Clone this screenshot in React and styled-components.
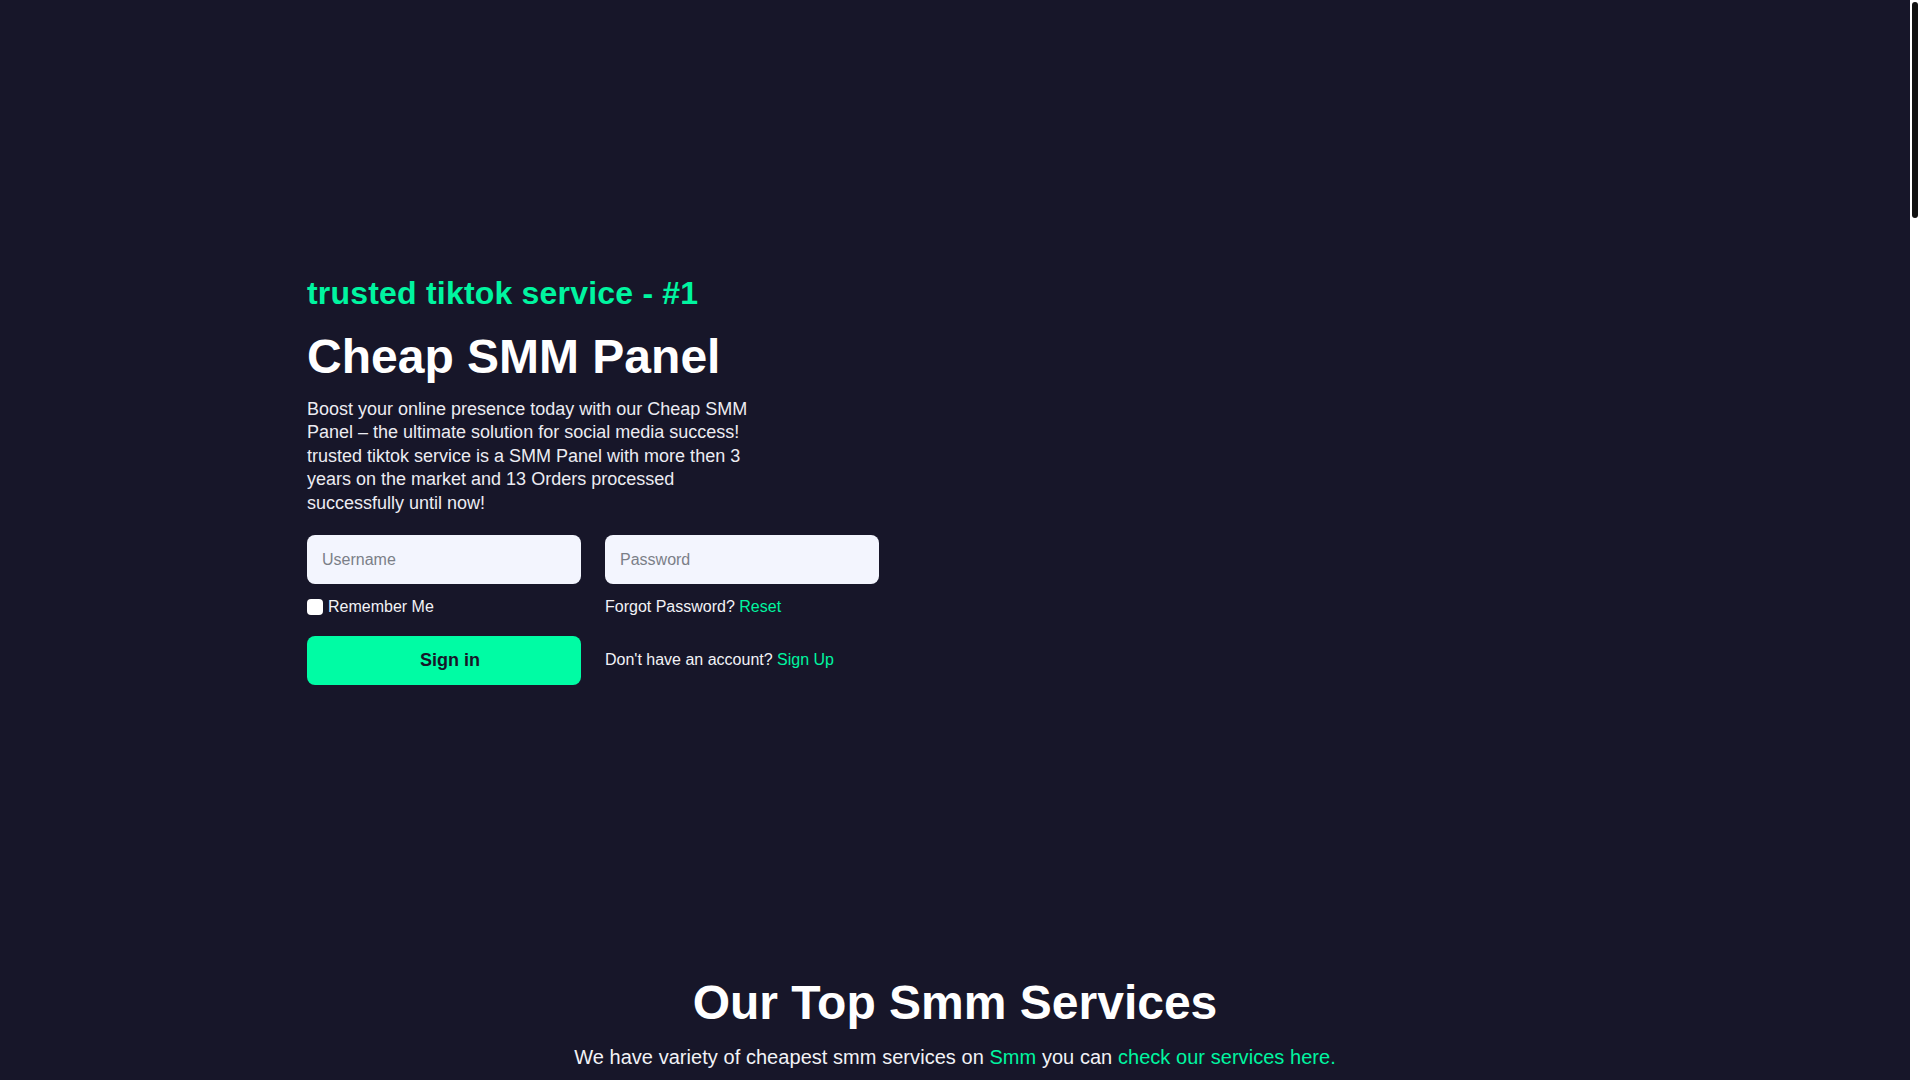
import React from 'react'
import styled, { createGlobalStyle } from 'styled-components'

const GlobalStyle = createGlobalStyle`
  * { box-sizing: border-box; }
  html, body {
    margin: 0;
    padding: 0;
    background: #171629;
  }
  body {
    font-family: "Liberation Sans", Arial, sans-serif;
    color: #fff;
  }
`

export default function App() {
  return (
    <>
      <GlobalStyle />
      <Page>
        <Hero>
          <Container>
            <Kicker>trusted tiktok service - #1</Kicker>
            <Headline>Cheap SMM Panel</Headline>
            <Lead>
              Boost your online presence today with our Cheap SMM Panel – the ultimate
              solution for social media success! trusted tiktok service is a SMM Panel
              with more then 3 years on the market and 13 Orders processed successfully
              until now!
            </Lead>
            <Form onSubmit={(e) => e.preventDefault()}>
              <Input type="text" placeholder="Username" />
              <Input type="password" placeholder="Password" />
              <Row>
                <Check type="checkbox" />
                <Label>Remember Me</Label>
              </Row>
              <Row>
                <Label>Forgot Password? <Link href="#">Reset</Link></Label>
              </Row>
              <Button type="submit">Sign in</Button>
              <Row $last>
                <Label>Don't have an account? <Link href="#">Sign Up</Link></Label>
              </Row>
            </Form>
          </Container>
        </Hero>
        <Services>
          <SectionTitle>Our Top Smm Services</SectionTitle>
          <SectionText>
            We have variety of cheapest smm services on <Link href="#">Smm</Link> you can{' '}
            <Link href="#">check our services here.</Link>
          </SectionText>
        </Services>
      </Page>
      <ScrollTrack>
        <ScrollThumb />
      </ScrollTrack>
    </>
  )
}

const Page = styled.div`
  min-height: 5400px;
  padding-right: 10px;
  background: #171629;
`;
const ScrollTrack = styled.div`
  position: fixed;
  top: 0;
  right: 0;
  width: 10px;
  height: 100vh;
  background: #fff;
  padding: 2px;
`;
const ScrollThumb = styled.div`
  width: 6px;
  height: 216px;
  border-radius: 4px;
  background: #111;
`;
const Hero = styled.section`
  padding: 274px 0 0;
`;
const Container = styled.div`
  width: 1296px;
  margin: 0 auto;
`;
const Kicker = styled.h3`
  margin: 0 0 16px;
  font-size: 32px;
  line-height: 1.2;
  font-weight: 700;
  letter-spacing: 0.2px;
  color: #00f5a0;
`;
const Headline = styled.h1`
  margin: 0 0 12px;
  font-size: 48px;
  line-height: 1.2;
  font-weight: 700;
  color: #fff;
`;
const Lead = styled.p`
  margin: 0 0 20px;
  max-width: 450px;
  font-size: 18px;
  line-height: 1.3;
  color: #ececf2;
`;
const Form = styled.form`
  width: 572px;
  display: grid;
  grid-template-columns: 274px 274px;
  column-gap: 24px;
  align-items: center;
`;
const Input = styled.input`
  height: 49px;
  padding: 1px 15px 0;
  border: none;
  border-radius: 8px;
  background: #f3f5fe;
  font-family: "Liberation Sans", Arial, sans-serif;
  font-size: 16px;
  color: #222;
  outline: none;
  &::placeholder { color: #7b7f88; }
`;
const Row = styled.div`
  display: flex;
  align-items: center;
  height: 20px;
  margin: ${(p) => (p.$last ? '0' : '13px 0 19px')};
`;
const Check = styled.input`
  appearance: none;
  width: 16px;
  height: 16px;
  margin: 0 5px 0 0;
  border-radius: 4px;
  background: #fff;
`;
const Label = styled.span`
  font-size: 16px;
  color: #f2f2f6;
`;
const Link = styled.a`
  color: #00f5a0;
  text-decoration: none;
`;
const Button = styled.button`
  height: 49px;
  padding: 0 0 0 12px;
  border: none;
  border-radius: 8px;
  background: #00fca4;
  color: #171629;
  font-family: "Liberation Sans", Arial, sans-serif;
  font-size: 18px;
  font-weight: 700;
  cursor: pointer;
`;
const Services = styled.section`
  padding-top: 289px;
  text-align: center;
`;
const SectionTitle = styled.h2`
  margin: 0 0 10px;
  font-size: 48px;
  line-height: 1.2;
  font-weight: 700;
  color: #fff;
`;
const SectionText = styled.p`
  margin: 0;
  font-size: 20px;
  line-height: 1.5;
  letter-spacing: 0.05px;
  color: #f2f2f6;
`;
